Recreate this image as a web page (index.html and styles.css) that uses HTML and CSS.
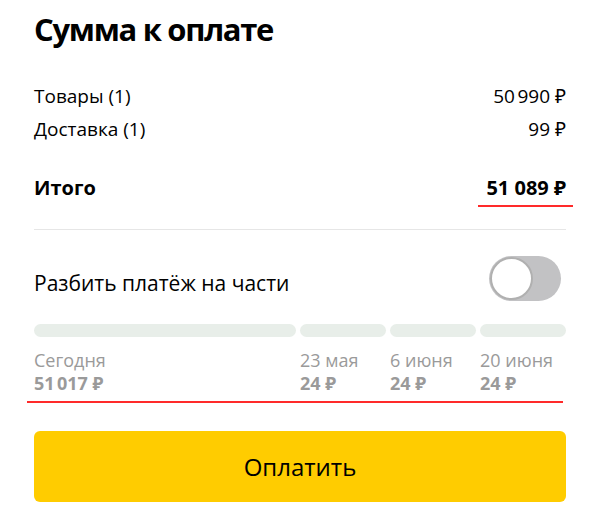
FILE: index.html
```html
<!DOCTYPE html>
<html lang="ru">
<head>
    <meta charset="UTF-8">
    <meta name="viewport" content="width=device-width, initial-scale=1.0">
    <title>Сумма к оплате</title>
    <link rel="stylesheet" href="styles.css">
</head>
<body>
    <div class="summary">
        <h1 class="title">Сумма к оплате</h1>
        <div class="row first"><span>Товары (1)</span><span>50&#8239;990 ₽</span></div>
        <div class="row"><span>Доставка (1)</span><span>99 ₽</span></div>
        <div class="row total"><span>Итого</span><span class="marked">51 089 ₽</span></div>
        <hr class="divider">
        <div class="split">
            <span class="split-label">Разбить платёж на части</span>
            <span class="toggle"><span class="knob"></span></span>
        </div>
        <div class="schedule">
            <div class="part">
                <div class="bar"></div>
                <div class="date">Сегодня</div>
                <div class="amount">51&#8239;017 ₽</div>
            </div>
            <div class="part">
                <div class="bar"></div>
                <div class="date">23 мая</div>
                <div class="amount">24 ₽</div>
            </div>
            <div class="part">
                <div class="bar"></div>
                <div class="date">6 июня</div>
                <div class="amount">24 ₽</div>
            </div>
            <div class="part">
                <div class="bar"></div>
                <div class="date">20 июня</div>
                <div class="amount">24 ₽</div>
            </div>
        </div>
        <button class="pay">Оплатить</button>
    </div>
</body>
</html>
```

FILE: styles.css
```css
body {
    margin: 0;
    font-family: "Open Sans", "Noto Sans", sans-serif;
    color: #000;
    background: #fff;
}
.summary {
    padding: 0 34px;
}
.title {
    margin: 0;
    padding-top: 9px;
    font-size: 31px;
    line-height: 40px;
    font-weight: 700;
    letter-spacing: -1.3px;
}
.row {
    display: flex;
    justify-content: space-between;
    font-size: 19px;
    line-height: 33px;
}
.row.first {
    margin-top: 31px;
}
.total {
    margin-top: 25px;
    font-size: 20px;
    font-weight: 700;
}
.marked {
    position: relative;
}
.marked::after {
    content: "";
    position: absolute;
    left: -8px;
    right: -7px;
    bottom: -3px;
    height: 2px;
    background: #ff2a2a;
}
.divider {
    margin: 25px 0 0;
    border: none;
    height: 1px;
    background: #e6e6e6;
}
.split {
    display: flex;
    justify-content: space-between;
    align-items: center;
    margin-top: 26px;
}
.split-label {
    padding-top: 8px;
    font-size: 21px;
}
.toggle {
    display: flex;
    width: 72px;
    height: 45px;
    margin-right: 5px;
    border-radius: 23px;
    background: #c2c2c4;
    box-sizing: border-box;
    padding: 1px;
}
.knob {
    width: 43px;
    height: 43px;
    border-radius: 50%;
    background: #fff;
    box-sizing: border-box;
    border: 2px solid #b0b0b0;
}
.schedule {
    position: relative;
    display: grid;
    grid-template-columns: 1fr 86px 86px 86px;
    gap: 4px;
    margin-top: 23px;
    padding-bottom: 9px;
}
.schedule::after {
    content: "";
    position: absolute;
    left: -7px;
    right: 3px;
    bottom: 0;
    height: 2px;
    background: #ff2a2a;
}
.bar {
    height: 13px;
    border-radius: 7px;
    background: #e8eee9;
}
.date {
    margin-top: 11px;
    font-size: 18px;
    line-height: 24px;
    color: #9a9a9a;
}
.amount {
    font-size: 18px;
    line-height: 22px;
    font-weight: 700;
    color: #9a9a9a;
}
.pay {
    display: block;
    width: 100%;
    height: 71px;
    margin-top: 28px;
    border: none;
    border-radius: 6px;
    background: #ffcc00;
    font-family: inherit;
    font-size: 24px;
    color: #000;
    cursor: pointer;
}
```
